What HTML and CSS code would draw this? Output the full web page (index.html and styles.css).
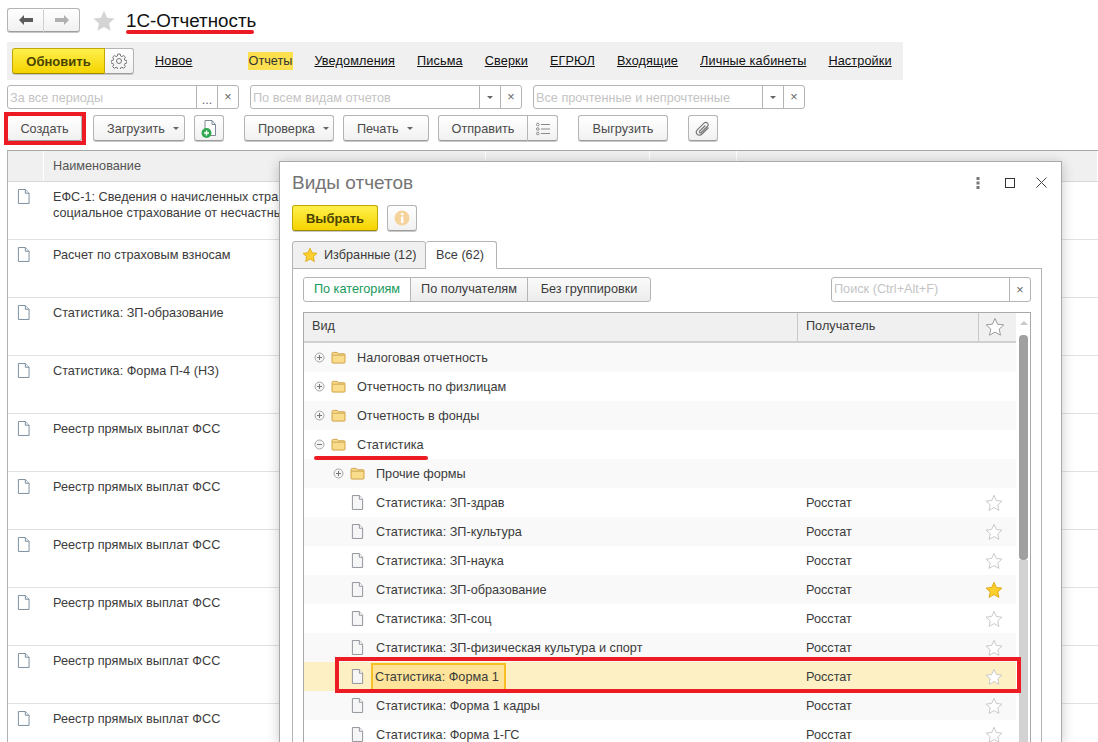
FILE: index.html
```html
<!DOCTYPE html>
<html lang="ru">

<head>
    <meta charset="UTF-8">
    <meta name="viewport" content="width=device-width, initial-scale=1.0">
    <title>1С-Отчетность</title>
    <link rel="stylesheet" href="styles.css">
</head>

<body>

    <svg class="sprite" aria-hidden="true">
        <symbol id="i-doc" viewBox="0 0 14 16">
            <path d="M1.500 .5h7.500l4 4v11h-11.500z" fill="#fff" stroke="#74889a"/>
            <path d="M9 .5v4h4" fill="#eef1f4" stroke="#74889a"/>
        </symbol>
        <symbol id="i-tree-doc" viewBox="0 0 14 16">
            <path d="M1.500 .5h7.500l3.500 4v11h-11z" fill="#f6f6f6" stroke="#8a8f96"/>
            <path d="M9 .5v4h3.500" fill="#fff" stroke="#8a8f96"/>
        </symbol>
        <symbol id="i-folder" viewBox="0 0 16 14">
            <path d="M1 3.500v8.500q0 1 1 1h12q1 0 1-1v-8q0-1-1-1h-6l-1.500-1.500h-4q-1.500 0-1.500 1.500z" fill="#f9dc8c" stroke="#cf9c3a"/>
            <path d="M1.500 4.500h13" stroke="#c9a550"/>
        </symbol>
        <symbol id="i-plus" viewBox="0 0 11 11">
            <circle cx="5.500" cy="5.500" r="4.500" fill="#f4f4f4" stroke="#a8a8a8"/>
            <path d="M3 5.500h5M5.500 3v5" stroke="#777"/>
        </symbol>
        <symbol id="i-minus" viewBox="0 0 11 11">
            <circle cx="5.500" cy="5.500" r="4.500" fill="#f4f4f4" stroke="#a8a8a8"/>
            <path d="M3 5.500h5" stroke="#777"/>
        </symbol>
        <symbol id="i-star" viewBox="0 0 20 20">
            <path d="M10 1.500l2.600 5.700 6.200.7-4.600 4.200 1.300 6.100-5.500-3.100-5.500 3.100 1.300-6.100-4.600-4.200 6.200-.7z"/>
        </symbol>
    </svg>

    <header class="page-head">
        <div class="nav-btns">
            <button class="btn nav-btn">
                <svg width="16" height="12" viewBox="0 0 16 12"><path d="M1 6l5-5v3h9v4h-9v3z" fill="#5c5c5c"/></svg>
            </button>
            <button class="btn nav-btn">
                <svg width="16" height="12" viewBox="0 0 16 12"><path d="M15 6l-5-5v3h-9v4h9v3z" fill="#b0b0b0"/></svg>
            </button>
        </div>
        <svg class="fav-star" width="24" height="24"><use href="#i-star"/></svg>
        <h1 class="page-title">1С-Отчетность</h1>
    </header>

    <nav class="tabs-bar">
        <div class="refresh">
            <button class="btn btn-yellow refresh-main">Обновить</button>
            <button class="btn refresh-gear">
                <svg width="16" height="16" viewBox="0 0 16 16" fill="none" stroke="#777">
                    <circle cx="8" cy="8" r="2.500"/>
                    <path d="M6.800 1h2.400l.4 2 1.300.6 1.800-1.100 1.700 1.700-1.100 1.800.6 1.300 2 .4v2.400l-2 .4-.6 1.300 1.100 1.800-1.700 1.700-1.800-1.100-1.300.6-.4 2h-2.400l-.4-2-1.300-.6-1.800 1.100-1.700-1.700 1.100-1.800-.6-1.300-2-.4v-2.400l2-.4.6-1.300-1.100-1.800 1.700-1.700 1.800 1.100 1.300-.6z"/>
                </svg>
            </button>
        </div>
        <a class="tab-link tab-new" href="#">Новое</a>
        <span class="tab-current">Отчеты</span>
        <a class="tab-link" href="#">Уведомления</a>
        <a class="tab-link" href="#">Письма</a>
        <a class="tab-link" href="#">Сверки</a>
        <a class="tab-link" href="#">ЕГРЮЛ</a>
        <a class="tab-link" href="#">Входящие</a>
        <a class="tab-link" href="#">Личные кабинеты</a>
        <a class="tab-link" href="#">Настройки</a>
    </nav>

    <div class="filters">
        <div class="field field-period">
            <span class="field-text">За все периоды</span>
            <span class="field-btn dots">...</span>
            <span class="field-btn">×</span>
        </div>
        <div class="field">
            <span class="field-text">По всем видам отчетов</span>
            <span class="field-btn"><i class="caret"></i></span>
            <span class="field-btn">×</span>
        </div>
        <div class="field">
            <span class="field-text">Все прочтенные и непрочтенные</span>
            <span class="field-btn"><i class="caret"></i></span>
            <span class="field-btn">×</span>
        </div>
    </div>

    <div class="toolbar">
        <button class="btn w-create">Создать</button>
        <button class="btn btn-menu w-load wide-left">Загрузить <i class="caret"></i></button>
        <button class="btn w-icon">
            <svg width="18" height="20" viewBox="0 0 18 20">
                <path d="M5 1.500h7l3.500 4v11h-10.500z" fill="#fff" stroke="#7a8a96"/>
                <path d="M12 1.500v4h3.500" fill="none" stroke="#7a8a96"/>
                <circle cx="6.500" cy="14" r="5" fill="#2fa84f"/>
                <path d="M4 14h5M6.500 11.500v5" stroke="#fff" stroke-width="1.500"/>
            </svg>
        </button>
        <button class="btn btn-menu w-check wide-group">Проверка <i class="caret"></i></button>
        <button class="btn btn-menu w-print">Печать <i class="caret"></i></button>
        <div class="btn-pair">
            <button class="btn w-send">Отправить</button>
            <button class="btn w-icon">
                <svg width="14" height="14" viewBox="0 0 14 14" fill="none" stroke="#8a8a8a">
                    <path d="M5 2.500h9M5 7h9M5 11.500h9"/>
                    <circle cx="1.800" cy="2.500" r="1.300"/>
                    <circle cx="1.800" cy="7" r="1.300"/>
                    <circle cx="1.800" cy="11.500" r="1.300"/>
                </svg>
            </button>
        </div>
        <button class="btn w-send wide-group">Выгрузить</button>
        <button class="btn w-icon wide-group">
            <svg width="16" height="16" viewBox="0 0 16 16" fill="none" stroke="#777" stroke-width="1.200">
                <path d="M13.500 6.500l-6.500 6.500c-1.500 1.500-3.700 1.500-4.800.3s-1.100-3.200.3-4.600l6.500-6.500c1-1 2.500-1 3.400-.1s.9 2.400-.1 3.400l-6 6c-.5.500-1.200.5-1.600.1s-.4-1.100.1-1.600l5.500-5.500"/>
            </svg>
        </button>
    </div>

    <section class="list">
        <div class="list-head">
            <div class="col-icon"></div>
            <div class="col-name">Наименование</div>
            <div class="col-to">Получатель</div>
            <div class="col-period">Период</div>
            <div class="col-state">Состояние</div>
        </div>
        <div class="list-row">
            <svg class="row-doc" width="13" height="15"><use href="#i-doc"/></svg>
            <div class="row-text">ЕФС-1: Сведения о начисленных стра<br>социальное страхование от несчастны</div>
        </div>
        <div class="list-row">
            <svg class="row-doc" width="13" height="15"><use href="#i-doc"/></svg>
            <div class="row-text">Расчет по страховым взносам</div>
        </div>
        <div class="list-row">
            <svg class="row-doc" width="13" height="15"><use href="#i-doc"/></svg>
            <div class="row-text">Статистика: ЗП-образование</div>
        </div>
        <div class="list-row">
            <svg class="row-doc" width="13" height="15"><use href="#i-doc"/></svg>
            <div class="row-text">Статистика: Форма П-4 (НЗ)</div>
        </div>
        <div class="list-row">
            <svg class="row-doc" width="13" height="15"><use href="#i-doc"/></svg>
            <div class="row-text">Реестр прямых выплат ФСС</div>
        </div>
        <div class="list-row">
            <svg class="row-doc" width="13" height="15"><use href="#i-doc"/></svg>
            <div class="row-text">Реестр прямых выплат ФСС</div>
        </div>
        <div class="list-row">
            <svg class="row-doc" width="13" height="15"><use href="#i-doc"/></svg>
            <div class="row-text">Реестр прямых выплат ФСС</div>
        </div>
        <div class="list-row">
            <svg class="row-doc" width="13" height="15"><use href="#i-doc"/></svg>
            <div class="row-text">Реестр прямых выплат ФСС</div>
        </div>
        <div class="list-row">
            <svg class="row-doc" width="13" height="15"><use href="#i-doc"/></svg>
            <div class="row-text">Реестр прямых выплат ФСС</div>
        </div>
        <div class="list-row">
            <svg class="row-doc" width="13" height="15"><use href="#i-doc"/></svg>
            <div class="row-text">Реестр прямых выплат ФСС</div>
        </div>
    </section>

    <!-- окно выбора вида отчета -->
    <div class="dialog">
        <div class="dialog-head">
            <h2 class="dialog-title">Виды отчетов</h2>
            <div class="dialog-ctrls">
                <svg width="4" height="14" viewBox="0 0 4 14" fill="#777"><rect x="0.500" y="1" width="3" height="3"/><rect x="0.500" y="5.500" width="3" height="3"/><rect x="0.500" y="10" width="3" height="3"/></svg>
                <svg width="10" height="10" viewBox="0 0 10 10" fill="none" stroke="#333"><rect x=".5" y=".5" width="9" height="9"/></svg>
                <svg class="ctrl-close" width="11" height="11" viewBox="0 0 11 11" stroke="#444"><path d="M.5 .5l10 10M10.500 .5l-10 10"/></svg>
            </div>
        </div>
        <div class="dialog-actions">
            <button class="btn btn-yellow choose">Выбрать</button>
            <button class="btn w-icon">
                <svg width="16" height="16" viewBox="0 0 16 16">
                    <circle cx="8" cy="8" r="7.500" fill="#f5d39c"/>
                    <rect x="7" y="3" width="2.400" height="2.200" fill="#fff"/>
                    <rect x="7" y="6.500" width="2.400" height="6.500" fill="#fff"/>
                </svg>
            </button>
        </div>
        <div class="tabs">
            <div class="tab">
                <svg class="star-gold" width="16" height="16"><use href="#i-star"/></svg>
                Избранные (12)
            </div>
            <div class="tab tab-active">Все (62)</div>
        </div>
        <div class="panel">
            <div class="panel-bar">
                <div class="seg">
                    <span class="seg-item seg-active">По категориям</span>
                    <span class="seg-item seg-mid">По получателям</span>
                    <span class="seg-item">Без группировки</span>
                </div>
                <div class="field field-search">
                    <span class="field-text">Поиск (Ctrl+Alt+F)</span>
                    <span class="field-btn">×</span>
                </div>
            </div>
            <div class="tree">
                <div class="tree-main">
                    <div class="tree-head">
                        <div class="th-name">Вид</div>
                        <div class="th-to">Получатель</div>
                        <div class="th-star"><svg class="star-empty" width="20" height="20"><use href="#i-star"/></svg></div>
                    </div>
                    <div class="tree-row">
                        <div class="cell-name"><svg width="11" height="11"><use href="#i-plus"/></svg><svg class="ic-folder" width="15" height="13"><use href="#i-folder"/></svg><span>Налоговая отчетность</span></div>
                    </div>
                    <div class="tree-row">
                        <div class="cell-name"><svg width="11" height="11"><use href="#i-plus"/></svg><svg class="ic-folder" width="15" height="13"><use href="#i-folder"/></svg><span>Отчетность по физлицам</span></div>
                    </div>
                    <div class="tree-row">
                        <div class="cell-name"><svg width="11" height="11"><use href="#i-plus"/></svg><svg class="ic-folder" width="15" height="13"><use href="#i-folder"/></svg><span>Отчетность в фонды</span></div>
                    </div>
                    <div class="tree-row">
                        <div class="cell-name"><svg width="11" height="11"><use href="#i-minus"/></svg><svg class="ic-folder" width="15" height="13"><use href="#i-folder"/></svg><span>Статистика</span></div>
                    </div>
                    <div class="tree-row">
                        <div class="cell-name level-1"><svg width="11" height="11"><use href="#i-plus"/></svg><svg class="ic-folder" width="15" height="13"><use href="#i-folder"/></svg><span>Прочие формы</span></div>
                    </div>
                    <div class="tree-row">
                        <div class="cell-name level-doc"><svg width="13" height="15"><use href="#i-tree-doc"/></svg><span>Статистика: ЗП-здрав</span></div>
                        <div class="cell-to">Росстат</div>
                        <svg class="star-empty" width="18" height="18"><use href="#i-star"/></svg>
                    </div>
                    <div class="tree-row">
                        <div class="cell-name level-doc"><svg width="13" height="15"><use href="#i-tree-doc"/></svg><span>Статистика: ЗП-культура</span></div>
                        <div class="cell-to">Росстат</div>
                        <svg class="star-empty" width="18" height="18"><use href="#i-star"/></svg>
                    </div>
                    <div class="tree-row">
                        <div class="cell-name level-doc"><svg width="13" height="15"><use href="#i-tree-doc"/></svg><span>Статистика: ЗП-наука</span></div>
                        <div class="cell-to">Росстат</div>
                        <svg class="star-empty" width="18" height="18"><use href="#i-star"/></svg>
                    </div>
                    <div class="tree-row">
                        <div class="cell-name level-doc"><svg width="13" height="15"><use href="#i-tree-doc"/></svg><span>Статистика: ЗП-образование</span></div>
                        <div class="cell-to">Росстат</div>
                        <svg class="star-gold" width="18" height="18"><use href="#i-star"/></svg>
                    </div>
                    <div class="tree-row">
                        <div class="cell-name level-doc"><svg width="13" height="15"><use href="#i-tree-doc"/></svg><span>Статистика: ЗП-соц</span></div>
                        <div class="cell-to">Росстат</div>
                        <svg class="star-empty" width="18" height="18"><use href="#i-star"/></svg>
                    </div>
                    <div class="tree-row">
                        <div class="cell-name level-doc"><svg width="13" height="15"><use href="#i-tree-doc"/></svg><span>Статистика: ЗП-физическая культура и спорт</span></div>
                        <div class="cell-to">Росстат</div>
                        <svg class="star-empty" width="18" height="18"><use href="#i-star"/></svg>
                    </div>
                    <div class="tree-row row-selected">
                        <div class="cell-name level-doc"><svg width="13" height="15"><use href="#i-tree-doc"/></svg><span class="cell-current">Статистика: Форма 1</span></div>
                        <div class="cell-to">Росстат</div>
                        <svg class="star-empty" width="18" height="18"><use href="#i-star"/></svg>
                    </div>
                    <div class="tree-row">
                        <div class="cell-name level-doc"><svg width="13" height="15"><use href="#i-tree-doc"/></svg><span>Статистика: Форма 1 кадры</span></div>
                        <div class="cell-to">Росстат</div>
                        <svg class="star-empty" width="18" height="18"><use href="#i-star"/></svg>
                    </div>
                    <div class="tree-row">
                        <div class="cell-name level-doc"><svg width="13" height="15"><use href="#i-tree-doc"/></svg><span>Статистика: Форма 1-ГС</span></div>
                        <div class="cell-to">Росстат</div>
                        <svg class="star-empty" width="18" height="18"><use href="#i-star"/></svg>
                    </div>
                </div>
                <div class="scroll">
                    <i class="scroll-up"></i>
                    <div class="scroll-thumb"></div>
                    <div class="scroll-track"></div>
                </div>
            </div>
        </div>
    </div>

    <!-- красные пометки поверх скриншота -->
    <div class="mark mark-line mark-title"></div>
    <div class="mark mark-line mark-stat"></div>
    <div class="mark mark-box mark-create"></div>
    <div class="mark mark-box mark-form"></div>

</body>

</html>
```

FILE: styles.css
```css
* {
    box-sizing: border-box;
}

body {
    font-family: "Liberation Sans", Arial, sans-serif;
    font-size: 12.7px;
    color: #3b3b3b;
    background-color: #fff;
    margin: 0;
    width: 1098px;
    height: 742px;
    overflow: hidden;
    position: relative;
}

.sprite {
    display: none;
}

/* buttons */
.btn {
    font-family: inherit;
    font-size: 12.7px;
    color: #4a4a4a;
    height: 26px;
    padding: 0;
    display: inline-flex;
    align-items: center;
    justify-content: center;
    gap: 5px;
    background: linear-gradient(#fff, #f1f1f1);
    border: 1px solid #b4b4b4;
    border-bottom-color: #9d9d9d;
    border-radius: 3px;
    box-shadow: 0 1px 0 #c8c8c8;
}

.btn-yellow {
    font-weight: bold;
    font-size: 13px;
    color: #4a4300;
    background: linear-gradient(#fff04c, #f4d300);
    border-color: #c2a800;
    border-bottom-color: #a08a00;
}

.toolbar .btn-menu {
    justify-content: flex-start;
    gap: 8px;
    padding-left: 13px;
}

.caret {
    display: inline-block;
    border-left: 3px solid transparent;
    border-right: 3px solid transparent;
    border-top: 3px solid #666;
}

/* head */
.page-head {
    height: 42px;
    padding: 8px 0 0 7px;
    display: flex;
    align-items: flex-start;
}

.nav-btns {
    display: flex;
}

.nav-btn {
    width: 37px;
    height: 24px;
}

.nav-btn:first-child {
    border-radius: 3px 0 0 3px;
    border-right: 1px solid #d0d0d0;
}

.nav-btn:last-child {
    width: 36px;
    border-radius: 0 3px 3px 0;
    border-left: none;
}

.fav-star {
    fill: #d4d4d4;
    margin: 1px 0 0 12px;
}

.page-title {
    margin: 1px 0 0 10px;
    font-size: 18.8px;
    line-height: 24px;
    font-weight: normal;
    color: #111;
}

.tabs-bar {
    margin-left: 7px;
    width: 896px;
    height: 38px;
    padding-left: 5px;
    background-color: #f0f0f0;
    display: flex;
    align-items: center;
    white-space: nowrap;
}

.refresh {
    display: flex;
    margin-right: 21px;
}

.refresh-main {
    width: 93px;
    border-radius: 3px 0 0 3px;
}

.refresh-gear {
    width: 29px;
    border-left: none;
    border-radius: 0 3px 3px 0;
}

.tab-link {
    color: #111;
    letter-spacing: 0.12px;
    margin-right: 22px;
}

.tab-new {
    margin-right: 55px;
}

.tab-current {
    color: #333;
    background-color: #fde04f;
    height: 18px;
    line-height: 18px;
    padding: 0 1px;
    margin-right: 21px;
}

/* filters */
.filters {
    margin-top: 5px;
    padding-left: 7px;
    display: flex;
    gap: 11px;
}

.field {
    width: 272px;
    height: 24px;
    display: flex;
    background-color: #fff;
    border: 1px solid #b4b4b4;
    border-radius: 3px;
}

.field-period {
    width: 232px;
}

.field-text {
    flex: 1;
    padding-left: 2px;
    line-height: 24px;
    color: #c4c4c4;
    white-space: nowrap;
    overflow: hidden;
}

.field-btn {
    width: 21px;
    display: flex;
    align-items: center;
    justify-content: center;
    color: #666;
    border-left: 1px solid #b4b4b4;
}

.dots {
    padding-top: 5px;
}

/* toolbar */
.toolbar {
    margin-top: 6px;
    padding-left: 7px;
    display: flex;
    gap: 9px;
}

.toolbar .btn {
    padding-top: 1px;
}

.w-create {
    width: 75px;
}

.w-load {
    width: 92px;
}

.w-icon {
    width: 30px;
}

.w-check {
    width: 90px;
}

.w-print {
    width: 86px;
}

.w-send {
    width: 90px;
}

.wide-left {
    margin-left: 2px;
}

.wide-group {
    margin-left: 11px;
}

.btn-pair {
    display: flex;
}

.btn-pair .w-send {
    border-radius: 3px 0 0 3px;
}

.btn-pair .w-icon {
    border-left: none;
    border-radius: 0 3px 3px 0;
}

/* main list */
.list {
    margin: 9px 0 0 7px;
    height: 592px;
    overflow: hidden;
    border-left: 1px solid #b0b0b0;
    border-top: 1px solid #a8a8a8;
}

.list-head {
    height: 31px;
    display: flex;
    background-color: #f0f0f0;
    border-bottom: 1px solid #d8d8d8;
    line-height: 30px;
    color: #555;
}

.list-head div {
    border-right: 1px solid #fff;
    padding-left: 9px;
}

.col-icon {
    width: 36px;
}

.col-name {
    width: 442px;
}

.col-to {
    width: 164px;
}

.col-period {
    width: 87px;
}

.col-state {
    flex: 1;
}

.list-row {
    height: 58px;
    display: flex;
    align-items: flex-start;
    padding-top: 7px;
    border-bottom: 1px solid #e2e2e2;
}

.row-doc {
    margin-left: 9px;
    flex-shrink: 0;
}

.row-text {
    margin-left: 23px;
    line-height: 16px;
    white-space: nowrap;
}

/* dialog */
.dialog {
    position: absolute;
    left: 279px;
    top: 161px;
    width: 783px;
    height: 581px;
    overflow: hidden;
    padding: 0 19px 0 12px;
    background-color: #fff;
    border: 1px solid #a9a9a9;
    border-bottom: none;
    box-shadow: 0 2px 12px rgba(0, 0, 0, 0.22);
}

.dialog-head {
    height: 43px;
    padding-bottom: 2px;
    display: flex;
    align-items: center;
    justify-content: space-between;
}

.dialog-title {
    margin: 0;
    font-size: 19px;
    font-weight: normal;
    color: #757575;
}

.dialog-ctrls {
    display: flex;
    align-items: center;
    gap: 25px;
    margin-right: -5px;
}

.ctrl-close {
    margin-left: -4px;
}

.dialog-actions {
    display: flex;
    gap: 9px;
}

.choose {
    width: 86px;
}

.tabs {
    margin-top: 10px;
    display: flex;
    position: relative;
    z-index: 1;
}

.tab {
    height: 28px;
    width: 134px;
    display: flex;
    align-items: center;
    gap: 6px;
    padding-left: 9px;
    background-color: #f0f0f0;
    border: 1px solid #b4b4b4;
    border-radius: 3px 3px 0 0;
}

.tab-active {
    width: 71px;
    padding-left: 10px;
    background-color: #fff;
    border-bottom-color: #fff;
    border-left: none;
}

.star-gold {
    fill: #fdcf2e;
    stroke: #dca60e;
}

.star-empty {
    fill: #fff;
    stroke: #c4c4c4;
    margin-left: 7px;
}

.th-star .star-empty {
    stroke: #9a9a9a;
    margin: 0 5px 0 0;
}

.tree-row .star-gold {
    margin-left: 7px;
}

.panel {
    margin-top: -1px;
    height: 480px;
    padding: 8px 10px 0;
    border: 1px solid #b4b4b4;
}

.panel-bar {
    display: flex;
    justify-content: space-between;
}

.seg {
    height: 25px;
    display: flex;
    border: 1px solid #b4b4b4;
    border-radius: 3px;
    background: linear-gradient(#fafafa, #ececec);
}

.seg-item {
    text-align: center;
    line-height: 23px;
    width: 123px;
    border-left: 1px solid #b4b4b4;
}

.seg-active {
    width: 106px;
    color: #169a5a;
    background-color: #fff;
    border-left: none;
    border-radius: 3px 0 0 3px;
}

.seg-mid {
    width: 117px;
}

.field-search {
    width: 200px;
    height: 25px;
}

.field-search .field-text {
    line-height: 23px;
}

/* tree */
.tree {
    margin-top: 10px;
    height: 440px;
    display: flex;
    border: 1px solid #a9a9a9;
    border-bottom: none;
}

.tree-main {
    width: 712px;
}

.tree-head {
    height: 30px;
    display: flex;
    background-color: #f0f0f0;
    border-bottom: 2px solid #d0d0d0;
    line-height: 27px;
}

.th-name {
    width: 494px;
    padding-left: 8px;
    border-right: 1px solid #c8c8c8;
}

.th-to {
    width: 181px;
    padding-left: 8px;
    border-right: 1px solid #c8c8c8;
}

.th-star {
    flex: 1;
    display: flex;
    align-items: center;
    justify-content: center;
}

.tree-row {
    height: 29px;
    display: flex;
    align-items: center;
}

.tree-row:nth-child(even) {
    background-color: #f9f9f9;
}

.tree-row.row-selected {
    background-color: #fdf0c4;
}

.cell-name {
    width: 493px;
    padding-left: 10px;
    display: flex;
    align-items: center;
}

.ic-folder {
    margin: 0 11px 0 6px;
}

.level-1 {
    padding-left: 29px;
}

.level-doc {
    padding-left: 47px;
}

.level-doc svg {
    margin-right: 12px;
}

.cell-current {
    margin-left: -5px;
    padding: 0 5px 0 2px;
    height: 28px;
    line-height: 24px;
    background-color: #fde49a;
    border: 2px solid #f6c025;
}

.cell-to {
    width: 181px;
    padding-left: 9px;
}

.scroll {
    flex: 1;
    padding: 8px 0 0 3px;
}

.scroll-up {
    display: block;
    margin: 0 0 10px 1px;
    width: 0;
    border-left: 4px solid transparent;
    border-right: 4px solid transparent;
    border-bottom: 4px solid #c8c8c8;
}

.scroll-thumb {
    height: 225px;
    width: 9px;
    background-color: #a0a0a0;
    border-radius: 4px;
}

.scroll-track {
    height: 200px;
    width: 9px;
    background-color: #d2d2d2;
}

/* red marks */
.mark {
    position: absolute;
}

.mark-line {
    height: 4px;
    background-color: #ed1c24;
    border-radius: 2px;
}

.mark-title {
    left: 126px;
    top: 30px;
    width: 128px;
}

.mark-stat {
    left: 314px;
    top: 456px;
    width: 114px;
}

.mark-box {
    border: 4px solid #ed1c24;
}

.mark-create {
    left: 4px;
    top: 112px;
    width: 82px;
    height: 33px;
}

.mark-form {
    left: 335px;
    top: 657px;
    width: 686px;
    height: 36px;
}
```
